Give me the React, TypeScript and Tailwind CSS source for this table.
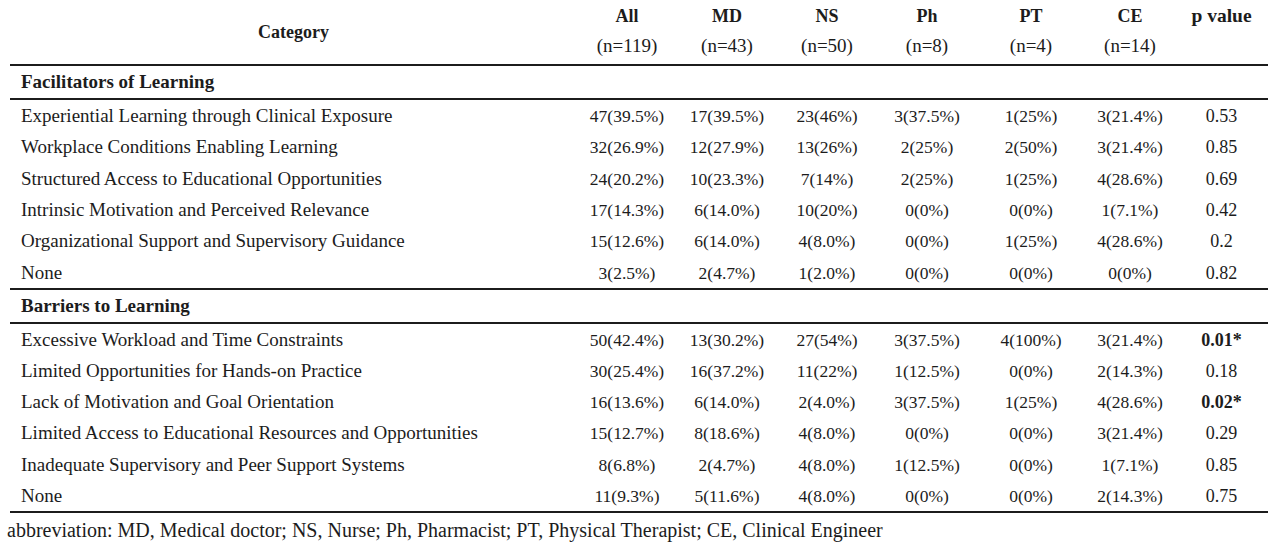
const cols =
  "grid grid-cols-[567px_100px_100px_100px_100px_108px_90px_93px]";

const groups = [
  {
    title: "Facilitators of Learning",
    rowH: "h-[31.33px]",
    rows: [
      ["Experiential Learning through Clinical Exposure", "47(39.5%)", "17(39.5%)", "23(46%)", "3(37.5%)", "1(25%)", "3(21.4%)", "0.53"],
      ["Workplace Conditions Enabling Learning", "32(26.9%)", "12(27.9%)", "13(26%)", "2(25%)", "2(50%)", "3(21.4%)", "0.85"],
      ["Structured Access to Educational Opportunities", "24(20.2%)", "10(23.3%)", "7(14%)", "2(25%)", "1(25%)", "4(28.6%)", "0.69"],
      ["Intrinsic Motivation and Perceived Relevance", "17(14.3%)", "6(14.0%)", "10(20%)", "0(0%)", "0(0%)", "1(7.1%)", "0.42"],
      ["Organizational Support and Supervisory Guidance", "15(12.6%)", "6(14.0%)", "4(8.0%)", "0(0%)", "1(25%)", "4(28.6%)", "0.2"],
      ["None", "3(2.5%)", "2(4.7%)", "1(2.0%)", "0(0%)", "0(0%)", "0(0%)", "0.82"],
    ],
  },
  {
    title: "Barriers to Learning",
    rowH: "h-[31.17px]",
    rows: [
      ["Excessive Workload and Time Constraints", "50(42.4%)", "13(30.2%)", "27(54%)", "3(37.5%)", "4(100%)", "3(21.4%)", "0.01*"],
      ["Limited Opportunities for Hands-on Practice", "30(25.4%)", "16(37.2%)", "11(22%)", "1(12.5%)", "0(0%)", "2(14.3%)", "0.18"],
      ["Lack of Motivation and Goal Orientation", "16(13.6%)", "6(14.0%)", "2(4.0%)", "3(37.5%)", "1(25%)", "4(28.6%)", "0.02*"],
      ["Limited Access to Educational Resources and Opportunities", "15(12.7%)", "8(18.6%)", "4(8.0%)", "0(0%)", "0(0%)", "3(21.4%)", "0.29"],
      ["Inadequate Supervisory and Peer Support Systems", "8(6.8%)", "2(4.7%)", "4(8.0%)", "1(12.5%)", "0(0%)", "1(7.1%)", "0.85"],
      ["None", "11(9.3%)", "5(11.6%)", "4(8.0%)", "0(0%)", "0(0%)", "2(14.3%)", "0.75"],
    ],
  },
];

const heads = [
  ["All", "(n=119)"],
  ["MD", "(n=43)"],
  ["NS", "(n=50)"],
  ["Ph", "(n=8)"],
  ["PT", "(n=4)"],
  ["CE", "(n=14)"],
  ["p value", ""],
];

function Rule() {
  return <div className="h-[2px] bg-[#1c1c1c]" />;
}

export default function App() {
  return (
    <div className="h-[548px] w-[1280px] bg-white font-[family-name:'Liberation_Serif','Times_New_Roman',serif] text-[18px] text-[#1c1c1c]">
      <div className="ml-[10px] w-[1258px]">
        {/* header */}
        <div className={`${cols} h-[64px]`}>
          <div className="flex items-center justify-center font-bold">Category</div>
          {heads.map(([label, n]) => (
            <div key={label} className="flex flex-col items-center pt-[1px] leading-[30px]">
              <span className={label === "p value" ? "text-[19.5px] font-bold" : "font-bold"}>
                {label}
              </span>
              <span className="text-[19px]">{n}</span>
            </div>
          ))}
        </div>
        <Rule />

        {groups.map((group) => (
          <div key={group.title}>
            <div className="flex h-[32px] items-center pl-[11px] text-[19px] font-bold">
              {group.title}
            </div>
            <Rule />
            {group.rows.map((row, i) => (
              <div
                key={i}
                className={`${cols} ${group.rowH} items-baseline leading-[31px]`}
              >
                <div className="pl-[11px] text-[19px]">{row[0]}</div>
                {row.slice(1).map((cell, j) => (
                  <div
                    key={j}
                    className={
                      j === 6
                        ? cell.endsWith("*")
                          ? "text-center text-[18px] font-bold"
                          : "text-center text-[18px]"
                        : "text-center text-[17.5px]"
                    }
                  >
                    {cell}
                  </div>
                ))}
              </div>
            ))}
            <Rule />
          </div>
        ))}
      </div>

      <div className="flex h-[34px] items-center pl-[7px] text-[20px]">
        abbreviation: MD, Medical doctor; NS, Nurse; Ph, Pharmacist; PT, Physical Therapist; CE, Clinical Engineer
      </div>
    </div>
  );
}
